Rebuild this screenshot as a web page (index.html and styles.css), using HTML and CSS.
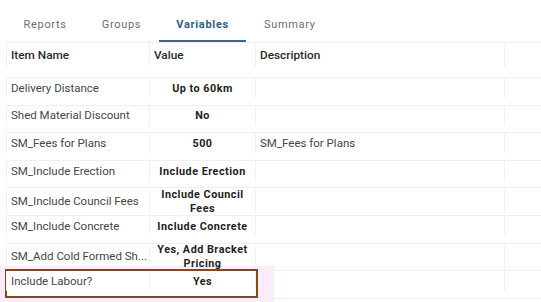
FILE: index.html
```html
<!DOCTYPE html>
<html>
<head>
<meta charset="utf-8">
<link rel="stylesheet" href="styles.css">
</head>
<body>
<div class="page">
  <nav class="tabs">
    <div class="tab">Reports</div>
    <div class="tab">Groups</div>
    <div class="tab active">Variables</div>
    <div class="tab">Summary</div>
  </nav>
  <div class="table">
    <div class="row head">
      <div class="cell name">Item Name</div>
      <div class="cell value">Value</div>
      <div class="cell desc">Description</div>
      <div class="cell extra"></div>
      <div class="cell tail"></div>
    </div>
    <div class="row">
      <div class="cell name">Delivery Distance</div>
      <div class="cell value">Up to 60km</div>
      <div class="cell desc"></div>
      <div class="cell extra"></div>
      <div class="cell tail"></div>
    </div>
    <div class="row">
      <div class="cell name">Shed Material Discount</div>
      <div class="cell value">No</div>
      <div class="cell desc"></div>
      <div class="cell extra"></div>
      <div class="cell tail"></div>
    </div>
    <div class="row">
      <div class="cell name">SM_Fees for Plans</div>
      <div class="cell value">500</div>
      <div class="cell desc">SM_Fees for Plans</div>
      <div class="cell extra"></div>
      <div class="cell tail"></div>
    </div>
    <div class="row">
      <div class="cell name">SM_Include Erection</div>
      <div class="cell value">Include Erection</div>
      <div class="cell desc"></div>
      <div class="cell extra"></div>
      <div class="cell tail"></div>
    </div>
    <div class="row">
      <div class="cell name">SM_Include Council Fees</div>
      <div class="cell value">Include Council Fees</div>
      <div class="cell desc"></div>
      <div class="cell extra"></div>
      <div class="cell tail"></div>
    </div>
    <div class="row">
      <div class="cell name">SM_Include Concrete</div>
      <div class="cell value">Include Concrete</div>
      <div class="cell desc"></div>
      <div class="cell extra"></div>
      <div class="cell tail"></div>
    </div>
    <div class="row">
      <div class="cell name">SM_Add Cold Formed Sh...</div>
      <div class="cell value">Yes, Add Bracket Pricing</div>
      <div class="cell desc"></div>
      <div class="cell extra"></div>
      <div class="cell tail"></div>
    </div>
    <div class="row marked">
      <div class="glow"></div>
      <div class="outline"></div>
      <div class="cell name">Include Labour?</div>
      <div class="cell value">Yes</div>
      <div class="cell desc"></div>
      <div class="cell extra"></div>
      <div class="cell tail"></div>
    </div>
  </div>
</div>
</body>
</html>
```

FILE: styles.css
```css
html, body {
  margin: 0;
  padding: 0;
  background: #ffffff;
  overflow: hidden;
}
body {
  font-family: Roboto, "Liberation Sans", sans-serif;
  width: 541px;
  height: 302px;
}
.page {
  padding: 8px 0 0 6px;
}
.tabs {
  display: flex;
  height: 34px;
}
.tab {
  box-sizing: border-box;
  height: 34px;
  padding: 10px 17.5px 0;
  font-size: 11px;
  letter-spacing: 0.7px;
  color: #6e6e6e;
  border-bottom: 2px solid transparent;
}
.tab.active {
  color: #2b5f86;
  font-weight: 700;
  border-bottom-color: #2f6b93;
}
.table {
  width: 560px;
  border-top: 1px solid #efefef;
}
.row {
  position: relative;
  display: grid;
  grid-template-columns: 143px 106px 249px 62px;
  height: 27.6px;
  border-bottom: 1px solid #efefef;
  box-sizing: border-box;
}
.row.head {
  height: 35px;
}
.cell {
  position: relative;
  z-index: 2;
  display: flex;
  align-items: center;
  padding: 1px 4px 0;
  font-size: 11.5px;
  color: #464646;
  border-left: 1px solid #f1f1f1;
  line-height: 13.5px;
  overflow: hidden;
  white-space: nowrap;
}
.cell.tail {
  border-left: none;
}
.row.head .cell {
  font-weight: 500;
  color: #2a2a2a;
  font-size: 11.8px;
  padding-top: 2px;
}
.row .cell.value {
  justify-content: center;
  text-align: center;
  font-weight: 700;
  font-size: 10.8px;
  letter-spacing: 0.5px;
  color: #222;
  white-space: normal;
  padding-left: 4px;
  padding-right: 4px;
}
.row.head .cell.value {
  justify-content: flex-start;
  font-weight: 500;
  font-size: 11.8px;
  letter-spacing: 0;
  color: #2a2a2a;
}
.cell.extra {
  border-right: 1px solid #f1f1f1;
}
.glow {
  position: absolute;
  z-index: 0;
  left: -6px;
  top: -5px;
  width: 274px;
  height: 40px;
  background: #fcebf9;
  pointer-events: none;
}
.outline {
  position: absolute;
  z-index: 1;
  left: -1px;
  top: -2px;
  width: 253px;
  height: 29px;
  box-sizing: border-box;
  border: 2px solid #7b4a1e;
  background: #ffffff;
  pointer-events: none;
}
```
